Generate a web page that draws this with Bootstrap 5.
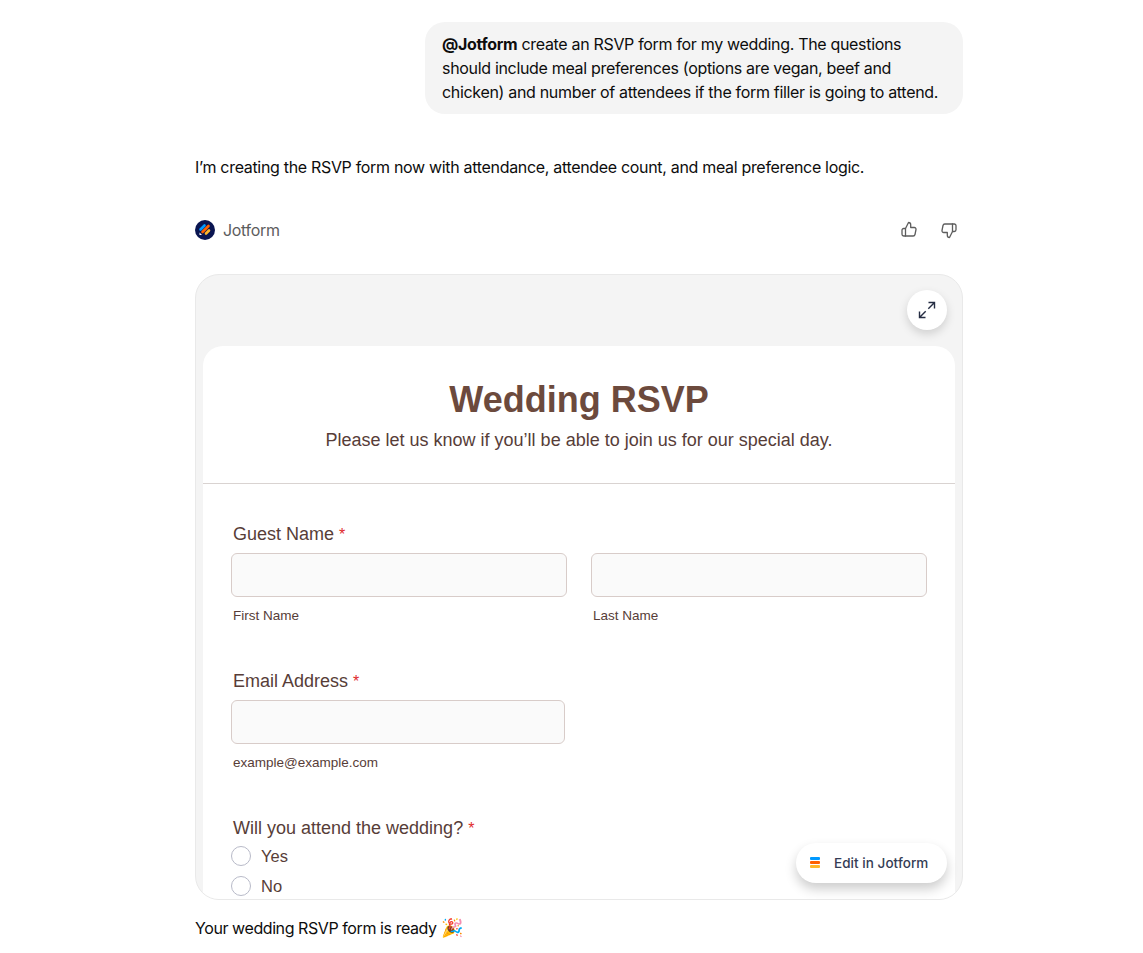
<!DOCTYPE html>
<html lang="en">
<head>
    <meta charset="UTF-8">
    <meta name="viewport" content="width=device-width, initial-scale=1.0">
    <title>Wedding RSVP</title>

    <link href="https://cdn.jsdelivr.net/npm/bootstrap@5.3.0/dist/css/bootstrap.min.css" rel="stylesheet">
    <style>
        body {
            background-color: #fff;
            color: #0d0d0d;
            font-family: "Inter", "Liberation Sans", sans-serif;
            font-size: 16px;
            line-height: 24px;
            letter-spacing: -0.32px;
        }

        .chat-col {
            width: 768px;
            margin-left: 195px;
            padding-top: 22px;
        }

        .user-bubble {
            width: 538px;
            background-color: #f4f4f4;
            border-radius: 20px;
            padding: 10px 17px;
            margin-bottom: 41px;
        }

        .user-bubble b {
            font-weight: 700;
        }

        .intro-line {
            margin-bottom: 39px;
        }

        .tool-row {
            height: 24px;
            margin-bottom: 32px;
        }

        .tool-name {
            color: #5d5d5d;
        }

        .tool-logo {
            width: 20px;
            height: 20px;
        }

        .thumb-icon {
            width: 20px;
            height: 20px;
            color: #5d5d5d;
        }

        .thumb-group {
            gap: 20px;
            margin-right: 4px;
        }

        .form-frame {
            height: 626px;
            background-color: #f4f4f4;
            border: 1px solid #e9e9e9;
            border-radius: 24px;
            padding: 71px 7px 0;
            overflow: hidden;
        }

        .form-sheet {
            background-color: #fff;
            border-radius: 20px 20px 0 0;
            height: 600px;
            font-family: "Liberation Sans", sans-serif;
            color: #573d38;
            letter-spacing: 0;
        }

        .sheet-head {
            height: 138px;
            padding-top: 33px;
            border-bottom: 1px solid #d9d3d1;
            text-align: center;
        }

        .sheet-title {
            font-family: "Liberation Sans", sans-serif;
            font-size: 36px;
            line-height: 42px;
            font-weight: 700;
            color: #6c4a3d;
            margin-bottom: 8px;
        }

        .sheet-sub {
            font-size: 18px;
            line-height: 22px;
        }

        .sheet-body {
            padding: 0 28px;
        }

        .field-label {
            font-size: 18px;
            line-height: 22px;
            padding-left: 2px;
            margin-bottom: 7px;
        }

        .req-mark {
            color: #e02b2b;
            font-size: 16px;
        }

        .field-box {
            height: 44px;
            background-color: #fafafa;
            border: 1px solid #d8ccc9;
            border-radius: 6px;
        }

        .email-box {
            width: 334px;
        }

        .field-hint {
            font-size: 13.5px;
            line-height: 16px;
            padding-left: 2px;
            margin-top: 11px;
        }

        .field-block {
            margin-bottom: 46px;
        }

        .field-block-first {
            padding-top: 39px;
        }

        .radio-group {
            margin-top: -6px;
        }

        .radio-line {
            font-size: 16.5px;
            height: 30px;
            gap: 10px;
        }

        .radio-dot {
            width: 20px;
            height: 20px;
            border: 1px solid #b8bac8;
            border-radius: 50%;
            background-color: #fff;
        }

        .expand-btn {
            position: absolute;
            top: 15px;
            right: 15px;
            width: 40px;
            height: 40px;
            border-radius: 50%;
            background-color: #fff;
            box-shadow: 0 4px 10px rgba(0, 0, 0, .15);
        }

        .edit-btn {
            position: absolute;
            right: 15px;
            bottom: 16px;
            width: 151px;
            height: 40px;
            border-radius: 20px;
            background-color: #fff;
            box-shadow: 0 6px 12px rgba(0, 0, 0, .2);
            font-family: "Inter", sans-serif;
            font-size: 13.5px;
            font-weight: 500;
            letter-spacing: .05px;
            color: #343c54;
            padding-left: 14px;
            gap: 13px;
        }

        .outro-line {
            margin-top: 16px;
            letter-spacing: -0.42px;
        }

        .party-glyph {
            font-size: 18px;
            line-height: 20px;
        }
    </style>
</head>
<body>
    <div class="chat-col">
        <div class="d-flex justify-content-end">
            <div class="user-bubble"><b>@Jotform</b> create an RSVP form for my wedding. The questions should include meal preferences (options are vegan, beef and chicken) and number of attendees if the form filler is going to attend.</div>
        </div>

        <p class="intro-line">I’m creating the RSVP form now with attendance, attendee count, and meal preference logic.</p>

        <div class="tool-row d-flex align-items-center justify-content-between">
            <div class="d-flex align-items-center gap-2">
                <svg class="tool-logo" viewBox="0 0 20 20">
                    <circle cx="10" cy="10" r="10" fill="#0a1551"/>
                    <path d="M5.500 9.500l4-4" stroke="#0099ff" stroke-width="2.600" stroke-linecap="round"/>
                    <path d="M7.500 12l6-6" stroke="#ff6100" stroke-width="2.600" stroke-linecap="round"/>
                    <path d="M11 13.500l3-3" stroke="#ffb629" stroke-width="2.600" stroke-linecap="round"/>
                    <path d="M4.500 12.500v2.500h2.500z" fill="#fff"/>
                </svg>
                <span class="tool-name">Jotform</span>
            </div>
            <div class="thumb-group d-flex align-items-center">
                <svg class="thumb-icon" viewBox="0 0 20 20" fill="none" stroke="currentColor" stroke-width="1.300" stroke-linejoin="round" stroke-linecap="round">
                    <path d="M6.500 8.500l3-6c1.300 0 2.200 1 2.200 2.200v2.800h3.600c1.100 0 1.900 1 1.700 2l-1 5c-.2.900-.9 1.500-1.800 1.500H6.500z"/>
                    <path d="M6.500 8.500H4.700c-.9 0-1.700.8-1.700 1.700v4.100c0 .9.8 1.700 1.700 1.700h1.800"/>
                </svg>
                <svg class="thumb-icon" viewBox="0 0 20 20" fill="none" stroke="currentColor" stroke-width="1.300" stroke-linejoin="round" stroke-linecap="round">
                    <path d="M13.500 11.500l-3 6c-1.300 0-2.200-1-2.200-2.200v-2.800H4.700c-1.100 0-1.900-1-1.700-2l1-5C4.200 4.600 4.900 4 5.800 4h7.700z"/>
                    <path d="M13.500 11.500h1.800c.9 0 1.700-.8 1.700-1.700V5.700C17 4.800 16.200 4 15.300 4h-1.800"/>
                </svg>
            </div>
        </div>

        <div class="form-frame position-relative">
            <div class="form-sheet">
                <div class="sheet-head">
                    <h1 class="sheet-title">Wedding RSVP</h1>
                    <div class="sheet-sub">Please let us know if you’ll be able to join us for our special day.</div>
                </div>
                <div class="sheet-body">
                    <div class="field-block field-block-first">
                        <div class="field-label">Guest Name <span class="req-mark">*</span></div>
                        <div class="row g-0 gap-4">
                            <div class="col">
                                <div class="field-box"></div>
                                <div class="field-hint">First Name</div>
                            </div>
                            <div class="col">
                                <div class="field-box"></div>
                                <div class="field-hint">Last Name</div>
                            </div>
                        </div>
                    </div>
                    <div class="field-block">
                        <div class="field-label">Email Address <span class="req-mark">*</span></div>
                        <div class="field-box email-box"></div>
                        <div class="field-hint">example@example.com</div>
                    </div>
                    <div>
                        <div class="field-label">Will you attend the wedding? <span class="req-mark">*</span></div>
                        <div class="radio-group">
                            <div class="radio-line d-flex align-items-center"><span class="radio-dot"></span>Yes</div>
                            <div class="radio-line d-flex align-items-center"><span class="radio-dot"></span>No</div>
                        </div>
                    </div>
                </div>
            </div>

            <div class="expand-btn d-flex align-items-center justify-content-center">
                <svg width="18" height="18" viewBox="0 0 18 18" fill="none" stroke="#252d43" stroke-width="1.400">
                    <path d="M10.500 1.500h6v6M16.500 1.500L10.300 7.700M7.500 16.500h-6v-6M1.500 16.500l6.200-6.200"/>
                </svg>
            </div>
            <div class="edit-btn d-flex align-items-center">
                <svg width="11" height="12" viewBox="0 0 11 12">
                    <rect y="0" width="10" height="3" rx="1" fill="#0099ff"/>
                    <rect y="4" width="10" height="3" rx="1" fill="#ff6100"/>
                    <rect y="8" width="10" height="3" rx="1" fill="#ffb629"/>
                </svg>
                <span>Edit in Jotform</span>
            </div>
        </div>

        <div class="outro-line">Your wedding RSVP form is ready <span class="party-glyph">🎉</span></div>
    </div>

    <script src="https://cdn.jsdelivr.net/npm/bootstrap@5.3.0/dist/js/bootstrap.bundle.min.js"></script>
</body>
</html>
